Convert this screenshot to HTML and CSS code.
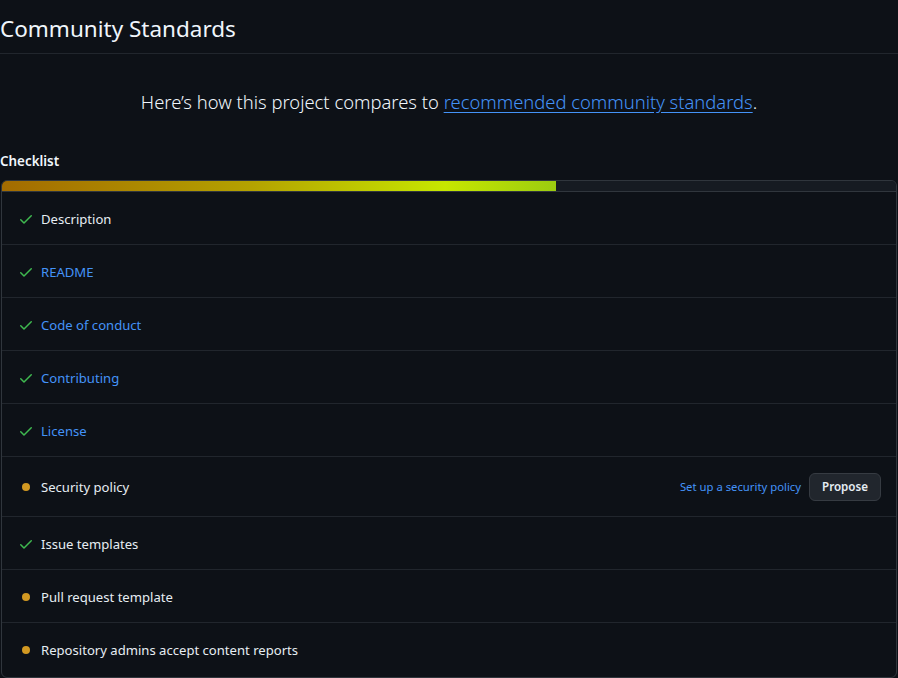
FILE: index.html
```html
<!DOCTYPE html>
<html lang="en">
<head>
<meta charset="utf-8">
<title>Community Standards</title>
<link rel="stylesheet" href="styles.css">
</head>
<body>
<div class="page">
  <div class="subhead">
    <h2 class="subhead-heading">Community Standards</h2>
  </div>
  <p class="lead">Here’s how this project compares to <a href="#" class="lead-link">recommended community standards</a>.</p>
  <h3 class="checklist-title">Checklist</h3>
  <div class="box">
    <div class="progress"><span class="progress-fill" style="width: 62%"></span></div>
    <ul class="rows">
      <li class="row">
        <svg class="icon check" viewBox="0 0 16 16" width="16" height="16"><path d="M13.78 4.22a.75.75 0 0 1 0 1.06l-7.25 7.25a.75.75 0 0 1-1.06 0L2.22 9.28a.751.751 0 0 1 .018-1.042.751.751 0 0 1 1.042-.018L6 10.94l6.72-6.72a.75.75 0 0 1 1.06 0Z"/></svg>
        <span class="label">Description</span>
      </li>
      <li class="row">
        <svg class="icon check" viewBox="0 0 16 16" width="16" height="16"><path d="M13.78 4.22a.75.75 0 0 1 0 1.06l-7.25 7.25a.75.75 0 0 1-1.06 0L2.22 9.28a.751.751 0 0 1 .018-1.042.751.751 0 0 1 1.042-.018L6 10.94l6.72-6.72a.75.75 0 0 1 1.06 0Z"/></svg>
        <a href="#" class="label link">README</a>
      </li>
      <li class="row">
        <svg class="icon check" viewBox="0 0 16 16" width="16" height="16"><path d="M13.78 4.22a.75.75 0 0 1 0 1.06l-7.25 7.25a.75.75 0 0 1-1.06 0L2.22 9.28a.751.751 0 0 1 .018-1.042.751.751 0 0 1 1.042-.018L6 10.94l6.72-6.72a.75.75 0 0 1 1.06 0Z"/></svg>
        <a href="#" class="label link">Code of conduct</a>
      </li>
      <li class="row">
        <svg class="icon check" viewBox="0 0 16 16" width="16" height="16"><path d="M13.78 4.22a.75.75 0 0 1 0 1.06l-7.25 7.25a.75.75 0 0 1-1.06 0L2.22 9.28a.751.751 0 0 1 .018-1.042.751.751 0 0 1 1.042-.018L6 10.94l6.72-6.72a.75.75 0 0 1 1.06 0Z"/></svg>
        <a href="#" class="label link">Contributing</a>
      </li>
      <li class="row">
        <svg class="icon check" viewBox="0 0 16 16" width="16" height="16"><path d="M13.78 4.22a.75.75 0 0 1 0 1.06l-7.25 7.25a.75.75 0 0 1-1.06 0L2.22 9.28a.751.751 0 0 1 .018-1.042.751.751 0 0 1 1.042-.018L6 10.94l6.72-6.72a.75.75 0 0 1 1.06 0Z"/></svg>
        <a href="#" class="label link">License</a>
      </li>
      <li class="row row-action">
        <svg class="icon dot" viewBox="0 0 16 16" width="16" height="16"><circle cx="8" cy="8" r="4"/></svg>
        <span class="label">Security policy</span>
        <span class="actions">
          <a href="#" class="action-link">Set up a security policy</a>
          <button class="btn" type="button">Propose</button>
        </span>
      </li>
      <li class="row">
        <svg class="icon check" viewBox="0 0 16 16" width="16" height="16"><path d="M13.78 4.22a.75.75 0 0 1 0 1.06l-7.25 7.25a.75.75 0 0 1-1.06 0L2.22 9.28a.751.751 0 0 1 .018-1.042.751.751 0 0 1 1.042-.018L6 10.94l6.72-6.72a.75.75 0 0 1 1.06 0Z"/></svg>
        <span class="label">Issue templates</span>
      </li>
      <li class="row">
        <svg class="icon dot" viewBox="0 0 16 16" width="16" height="16"><circle cx="8" cy="8" r="4"/></svg>
        <span class="label">Pull request template</span>
      </li>
      <li class="row row-last">
        <svg class="icon dot" viewBox="0 0 16 16" width="16" height="16"><circle cx="8" cy="8" r="4"/></svg>
        <span class="label">Repository admins accept content reports</span>
      </li>
    </ul>
  </div>
</div>
</body>
</html>
```
FILE: styles.css
```css
html, body {
  margin: 0;
  padding: 0;
  background: #0d1117;
}
body {
  color: #e6edf3;
  font-family: "Noto Sans", "Open Sans", sans-serif;
  font-size: 13.1px;
  line-height: 20px;
}
.page {
  width: 898px;
  height: 678px;
  overflow: hidden;
}
.subhead {
  border-bottom: 1px solid #21262d;
  padding: 11px 0 6px;
}
.subhead-heading {
  margin: 0;
  font-size: 22.5px;
  font-weight: 400;
  line-height: 36px;
  color: #f0f6fc;
}
.lead {
  margin: 33px 0 0;
  text-align: center;
  font-size: 18.4px;
  font-weight: 300;
  line-height: 30px;
  color: #f0f6fc;
}
.lead-link {
  color: #4493f8;
  text-decoration: underline;
  text-underline-offset: 3px;
}
.checklist-title {
  margin: 34px 0 0;
  font-size: 13.4px;
  font-weight: 600;
  line-height: 20px;
  color: #f0f6fc;
}
.box {
  margin: 9px 1px 0;
  border: 1px solid #30363d;
  border-radius: 6px;
  overflow: hidden;
}
.progress {
  height: 10px;
  background: #161b22;
  border-bottom: 1px solid #30363d;
  display: flex;
}
.progress-fill {
  display: block;
  height: 100%;
  background: linear-gradient(to right, #a36b00 0%, #b4a200 45%, #c6e700 80%, #9ccc10 100%);
}
.rows {
  list-style: none;
  margin: 0;
  padding: 0;
}
.row {
  display: flex;
  align-items: center;
  gap: 7px;
  padding: 17px 16px 15px;
  border-top: 1px solid #21262d;
}
.row:first-child {
  border-top: 0;
}
.row-action {
  padding: 16px 15px 15px 16px;
}
.row-last {
  padding-bottom: 17px;
}
.icon {
  flex: none;
  width: 16px;
  height: 16px;
}
.check {
  fill: #3fb950;
}
.dot {
  fill: #d29922;
}
.label {
  color: #e6edf3;
  text-decoration: none;
}
.link {
  color: #4493f8;
}
.actions {
  margin-left: auto;
  display: flex;
  align-items: center;
  gap: 8px;
}
.action-link {
  color: #4493f8;
  font-size: 11.3px;
  text-decoration: none;
}
.btn {
  height: 28px;
  padding: 0 12px;
  background: #21262d;
  color: #e6edf3;
  border: 1px solid #363b42;
  border-radius: 6px;
  font-family: inherit;
  font-size: 11.6px;
  font-weight: 600;
  line-height: 20px;
}
```
